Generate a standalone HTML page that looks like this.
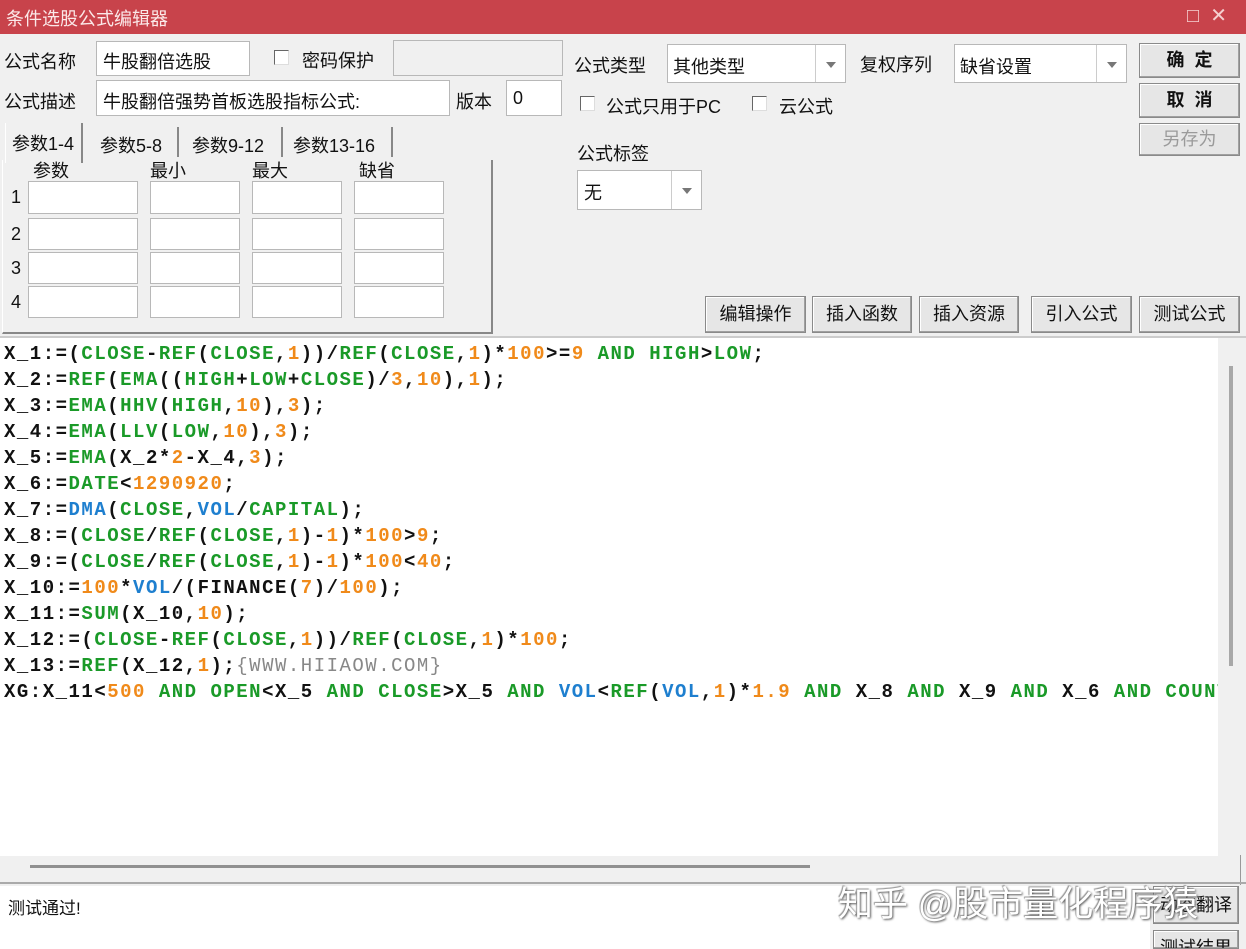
<!DOCTYPE html>
<html><head><meta charset="utf-8"><style>
*{box-sizing:border-box;margin:0;padding:0}
html,body{width:1246px;height:949px;overflow:hidden}
body{background:#f0f0f0;position:relative;font-family:"Liberation Sans","Noto Sans CJK SC",sans-serif;font-size:18px;color:#111}
.a{position:absolute;white-space:nowrap}
.inp{position:absolute;background:#fff;border:1px solid #b8b8b8}
.btn{position:absolute;background:#e6e6e6;border:1px solid #8a8a8a;box-shadow:inset -1px -1px 0 #a0a0a0,inset 1px 1px 0 #fff;text-align:center;font-size:18px;overflow:hidden}
.cb{position:absolute;width:15px;height:15px;background:#fff;border:1px solid #666;border-right-color:#ddd;border-bottom-color:#ddd}
.dd{position:absolute;right:0;top:0;bottom:0;width:30px;border-left:1px solid #ccc}
.dd:after{content:"";position:absolute;left:10px;top:50%;margin-top:-2px;border:5px solid transparent;border-top:6px solid #777;border-bottom:0}
.code{position:absolute;left:0;top:338px;width:1218px;height:518px;background:#fff;font-family:"Liberation Mono",monospace;font-weight:bold;font-size:19px;letter-spacing:1.5px;line-height:26px;padding-left:4px;padding-top:3px;color:#111;overflow:hidden}
.code div{white-space:pre;height:26px}
.g{color:#1a9a28}.o{color:#f08a1a}.b{color:#1e7fcf}.gr{color:#888;font-weight:normal}
</style></head><body>
<div class="a" style="left:0;top:0;width:1246px;height:34px;background:#c8434b"></div>
<div class="a" style="left:6px;top:5px;color:#fbe8e8;font-size:18px">条件选股公式编辑器</div>
<div class="a" style="left:1187px;top:3px;color:#f5d0d0;font-size:20px">□&nbsp;&nbsp;✕</div>

<div class="a" style="left:4px;top:48px">公式名称</div>
<div class="inp" style="left:96px;top:41px;width:154px;height:35px"><span class="a" style="left:6px;top:6px">牛股翻倍选股</span></div>
<div class="cb" style="left:274px;top:50px"></div>
<div class="a" style="left:302px;top:47px">密码保护</div>
<div class="inp" style="left:393px;top:40px;width:170px;height:36px;background:#f0f0f0"></div>
<div class="a" style="left:4px;top:88px">公式描述</div>
<div class="inp" style="left:96px;top:80px;width:354px;height:36px"><span class="a" style="left:6px;top:7px">牛股翻倍强势首板选股指标公式:</span></div>
<div class="a" style="left:456px;top:88px">版本</div>
<div class="inp" style="left:506px;top:80px;width:56px;height:36px"><span class="a" style="left:6px;top:7px">0</span></div>

<div class="a" style="left:574px;top:52px">公式类型</div>
<div class="inp" style="left:667px;top:44px;width:179px;height:39px"><span class="a" style="left:5px;top:8px">其他类型</span><div class="dd"></div></div>
<div class="a" style="left:860px;top:51px">复权序列</div>
<div class="inp" style="left:954px;top:44px;width:173px;height:39px"><span class="a" style="left:5px;top:8px">缺省设置</span><div class="dd"></div></div>
<div class="cb" style="left:580px;top:96px"></div>
<div class="a" style="left:606px;top:93px">公式只用于PC</div>
<div class="cb" style="left:752px;top:96px"></div>
<div class="a" style="left:779px;top:93px">云公式</div>
<div class="a" style="left:577px;top:140px">公式标签</div>
<div class="inp" style="left:577px;top:170px;width:125px;height:40px"><span class="a" style="left:6px;top:8px">无</span><div class="dd"></div></div>

<div class="btn" style="left:1139px;top:43px;width:101px;height:35px;line-height:32px;font-weight:bold">确&nbsp;&nbsp;定</div>
<div class="btn" style="left:1139px;top:83px;width:101px;height:35px;line-height:32px;font-weight:bold">取&nbsp;&nbsp;消</div>
<div class="btn" style="left:1139px;top:123px;width:101px;height:33px;line-height:30px;color:#9a9a9a">另存为</div>

<div class="btn" style="left:705px;top:296px;width:101px;height:37px;line-height:34px">编辑操作</div>
<div class="btn" style="left:812px;top:296px;width:100px;height:37px;line-height:34px">插入函数</div>
<div class="btn" style="left:919px;top:296px;width:100px;height:37px;line-height:34px">插入资源</div>
<div class="btn" style="left:1031px;top:296px;width:101px;height:37px;line-height:34px">引入公式</div>
<div class="btn" style="left:1139px;top:296px;width:101px;height:37px;line-height:34px">测试公式</div>

<div class="a" style="left:2px;top:160px;width:491px;height:174px;border-right:2px solid #888;border-bottom:2px solid #888;border-left:1px solid #fff"></div>
<div class="a" style="left:5px;top:123px;width:78px;height:40px;border-right:2px solid #888;border-left:1px solid #fff;background:#f0f0f0"></div>
<div class="a" style="left:12px;top:130px;font-size:18px">参数1-4</div>
<div class="a" style="left:100px;top:132px;font-size:18px">参数5-8</div>
<div class="a" style="left:177px;top:127px;height:30px;border-left:2px solid #888"></div>
<div class="a" style="left:192px;top:132px;font-size:18px">参数9-12</div>
<div class="a" style="left:281px;top:127px;height:30px;border-left:2px solid #888"></div>
<div class="a" style="left:293px;top:132px;font-size:18px">参数13-16</div>
<div class="a" style="left:391px;top:127px;height:30px;border-left:2px solid #888"></div>
<div class="a" style="left:33px;top:157px">参数</div>
<div class="a" style="left:150px;top:157px">最小</div>
<div class="a" style="left:252px;top:157px">最大</div>
<div class="a" style="left:359px;top:157px">缺省</div>
<div class="a" style="left:11px;top:187px">1</div><div class="a" style="left:11px;top:224px">2</div><div class="a" style="left:11px;top:258px">3</div><div class="a" style="left:11px;top:292px">4</div>
<div class="inp" style="left:28px;top:181px;width:110px;height:33px"></div><div class="inp" style="left:150px;top:181px;width:90px;height:33px"></div><div class="inp" style="left:252px;top:181px;width:90px;height:33px"></div><div class="inp" style="left:354px;top:181px;width:90px;height:33px"></div>
<div class="inp" style="left:28px;top:218px;width:110px;height:32px"></div><div class="inp" style="left:150px;top:218px;width:90px;height:32px"></div><div class="inp" style="left:252px;top:218px;width:90px;height:32px"></div><div class="inp" style="left:354px;top:218px;width:90px;height:32px"></div>
<div class="inp" style="left:28px;top:252px;width:110px;height:32px"></div><div class="inp" style="left:150px;top:252px;width:90px;height:32px"></div><div class="inp" style="left:252px;top:252px;width:90px;height:32px"></div><div class="inp" style="left:354px;top:252px;width:90px;height:32px"></div>
<div class="inp" style="left:28px;top:286px;width:110px;height:32px"></div><div class="inp" style="left:150px;top:286px;width:90px;height:32px"></div><div class="inp" style="left:252px;top:286px;width:90px;height:32px"></div><div class="inp" style="left:354px;top:286px;width:90px;height:32px"></div>

<div class="a" style="left:0;top:336px;width:1246px;border-top:2px solid #ccc"></div>
<div class="code">
<div>X_1:=(<span class="g">CLOSE</span>-<span class="g">REF</span>(<span class="g">CLOSE</span>,<span class="o">1</span>))/<span class="g">REF</span>(<span class="g">CLOSE</span>,<span class="o">1</span>)*<span class="o">100</span>&gt;=<span class="o">9</span> <span class="g">AND</span> <span class="g">HIGH</span>&gt;<span class="g">LOW</span>;</div>
<div>X_2:=<span class="g">REF</span>(<span class="g">EMA</span>((<span class="g">HIGH</span>+<span class="g">LOW</span>+<span class="g">CLOSE</span>)/<span class="o">3</span>,<span class="o">10</span>),<span class="o">1</span>);</div>
<div>X_3:=<span class="g">EMA</span>(<span class="g">HHV</span>(<span class="g">HIGH</span>,<span class="o">10</span>),<span class="o">3</span>);</div>
<div>X_4:=<span class="g">EMA</span>(<span class="g">LLV</span>(<span class="g">LOW</span>,<span class="o">10</span>),<span class="o">3</span>);</div>
<div>X_5:=<span class="g">EMA</span>(X_2*<span class="o">2</span>-X_4,<span class="o">3</span>);</div>
<div>X_6:=<span class="g">DATE</span>&lt;<span class="o">1290920</span>;</div>
<div>X_7:=<span class="b">DMA</span>(<span class="g">CLOSE</span>,<span class="b">VOL</span>/<span class="g">CAPITAL</span>);</div>
<div>X_8:=(<span class="g">CLOSE</span>/<span class="g">REF</span>(<span class="g">CLOSE</span>,<span class="o">1</span>)-<span class="o">1</span>)*<span class="o">100</span>&gt;<span class="o">9</span>;</div>
<div>X_9:=(<span class="g">CLOSE</span>/<span class="g">REF</span>(<span class="g">CLOSE</span>,<span class="o">1</span>)-<span class="o">1</span>)*<span class="o">100</span>&lt;<span class="o">40</span>;</div>
<div>X_10:=<span class="o">100</span>*<span class="b">VOL</span>/(FINANCE(<span class="o">7</span>)/<span class="o">100</span>);</div>
<div>X_11:=<span class="g">SUM</span>(X_10,<span class="o">10</span>);</div>
<div>X_12:=(<span class="g">CLOSE</span>-<span class="g">REF</span>(<span class="g">CLOSE</span>,<span class="o">1</span>))/<span class="g">REF</span>(<span class="g">CLOSE</span>,<span class="o">1</span>)*<span class="o">100</span>;</div>
<div>X_13:=<span class="g">REF</span>(X_12,<span class="o">1</span>);<span class="gr">{WWW.HIIAOW.COM}</span></div>
<div>XG:X_11&lt;<span class="o">500</span> <span class="g">AND</span> <span class="g">OPEN</span>&lt;X_5 <span class="g">AND</span> <span class="g">CLOSE</span>&gt;X_5 <span class="g">AND</span> <span class="b">VOL</span>&lt;<span class="g">REF</span>(<span class="b">VOL</span>,<span class="o">1</span>)*<span class="o">1.9</span> <span class="g">AND</span> X_8 <span class="g">AND</span> X_9 <span class="g">AND</span> X_6 <span class="g">AND</span> <span class="g">COUNT</span></div>
</div>
<div class="a" style="left:1218px;top:338px;width:28px;height:518px;background:#f0f0f0"></div>
<div class="a" style="left:1229px;top:366px;width:4px;height:300px;background:#a8a8a8"></div>
<div class="a" style="left:30px;top:865px;width:780px;height:3px;background:#909090"></div>
<div class="a" style="left:1240px;top:855px;height:30px;border-left:1px solid #999"></div>
<div class="a" style="left:0;top:882px;width:1246px;border-top:2px solid #aaa"></div>
<div class="a" style="left:0;top:886px;width:1150px;height:63px;background:#fff"></div>
<div class="a" style="left:8px;top:894px;font-size:17px">测试通过!</div>
<div class="btn" style="left:1153px;top:886px;width:86px;height:38px;line-height:36px">动态翻译</div>
<div class="btn" style="left:1153px;top:930px;width:86px;height:19px;line-height:34px">测试结果</div>
<div class="a" style="left:838px;top:876px;font-size:35px;color:#fff;text-shadow:1px 1px 2px #555,-1px -1px 1px #999">知乎 @股市量化程序猿</div>
</body></html>
